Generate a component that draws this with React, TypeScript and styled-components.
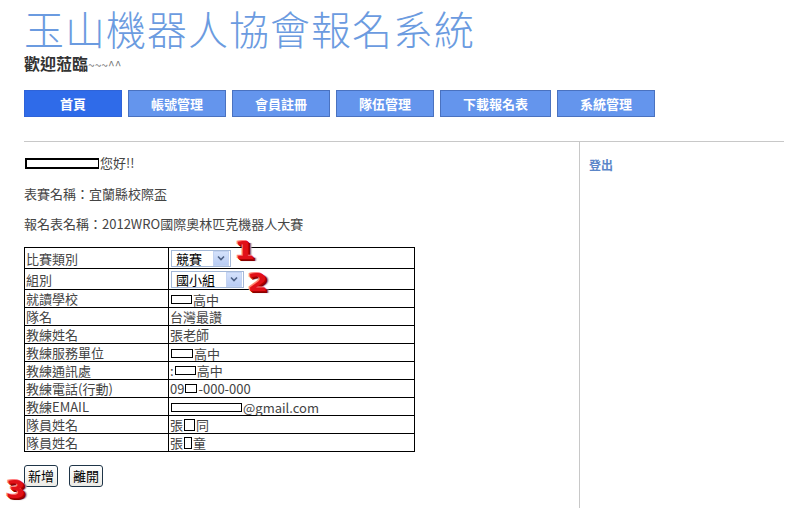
import React from 'react';
import styled, { createGlobalStyle } from 'styled-components';

const GlobalStyle = createGlobalStyle`
  html, body {
    margin: 0;
    padding: 0;
    background: #fff;
  }
  body {
    font-family: "Noto Sans CJK TC", "Noto Sans", sans-serif;
    color: #444;
  }
`;

const Page = styled.div`
  width: 793px;
  height: 508px;
  padding-left: 24px;
  padding-right: 9px;
  box-sizing: border-box;
  overflow: hidden;
`;

const Title = styled.h1`
  margin: 7px 0 0 0;
  font-size: 40px;
  line-height: 42px;
  font-weight: 300;
  letter-spacing: 1px;
  color: #6b9be0;
`;

const Welcome = styled.div`
  margin-top: 5px;
  font-size: 16px;
  line-height: 18px;
  font-weight: 700;
  color: #333;
`;

const Wave = styled.span`
  font-size: 12px;
  font-weight: 400;
  color: #777;
`;

const Nav = styled.nav`
  display: flex;
  gap: 6px;
  margin-top: 16px;
`;

const NavButton = styled.a<{ $active?: boolean; $wide?: boolean }>`
  display: flex;
  align-items: center;
  justify-content: center;
  width: ${({ $wide }) => ($wide ? '109px' : '96px')};
  height: 25px;
  border: 1px solid ${({ $active }) => ($active ? '#2f63d8' : '#4a72c0')};
  background: ${({ $active }) => ($active ? '#2f6be9' : '#6495ed')};
  color: #fff;
  font-size: 13px;
  font-weight: 700;
  text-decoration: none;
`;

const Main = styled.div`
  display: grid;
  grid-template-columns: 555px 1fr;
  margin-top: 24px;
  border-top: 1px solid #c8c8c8;
  height: 380px;
`;

const Content = styled.div`
  padding-top: 13px;
`;

const Side = styled.div`
  border-left: 1px solid #c8c8c8;
  padding: 9px 0 0 9px;
`;

const Logout = styled.a`
  font-size: 12px;
  font-weight: 700;
  color: #5b86c8;
  text-decoration: none;
`;

const Line = styled.div<{ $gap?: number }>`
  font-size: 13px;
  line-height: 16px;
  color: #444;
  margin-top: ${({ $gap }) => $gap ?? 0}px;
  display: flex;
  align-items: center;
`;

const Blank = styled.span<{ $w: number; $h?: number; $thick?: boolean }>`
  display: inline-block;
  width: ${({ $w }) => $w}px;
  height: ${({ $h }) => $h ?? 9}px;
  border: ${({ $thick }) => ($thick ? 2 : 1)}px solid #000;
  border-right-width: 1px;
  box-sizing: border-box;
  vertical-align: middle;
  margin: 0 1px;
`;

const TableWrap = styled.div`
  position: relative;
  margin-top: 15px;
  width: 391px;
`;

const Table = styled.table`
  border-collapse: collapse;
  width: 391px;
  border: 1px solid #000;
  font-size: 13px;
  color: #444;
`;

const Cell = styled.td<{ $tall?: boolean }>`
  border: 1px solid #000;
  padding: 0 0 0 1px;
  height: ${({ $tall }) => ($tall ? 20 : 17)}px;
  line-height: 15px;
  white-space: nowrap;
  vertical-align: middle;
`;

const LabelCell = styled(Cell)`
  width: 142px;
`;

const Inline = styled.span`
  display: inline-flex;
  align-items: center;
`;

const SelectBox = styled.span<{ $w: number }>`
  display: inline-flex;
  align-items: center;
  justify-content: space-between;
  width: ${({ $w }) => $w}px;
  height: 17px;
  margin-left: 1px;
  border: 1px solid #a5b9d8;
  box-sizing: border-box;
  background: #fff;
  padding-left: 4px;
  color: #000;
  font-size: 13px;
`;

const SelectArrow = styled.span`
  display: flex;
  align-items: center;
  justify-content: center;
  width: 16px;
  height: 15px;
  margin-right: 1px;
  background: linear-gradient(#d4e1fb, #b9cdf4);
  border: 1px solid #c3d3f2;
  box-sizing: border-box;
`;

const Mark = styled.span<{ $x: number; $y: number }>`
  position: absolute;
  left: ${({ $x }) => $x}px;
  top: ${({ $y }) => $y}px;
  font-family: "DejaVu Sans", sans-serif;
  font-weight: 900;
  font-size: 25px;
  line-height: 25px;
  color: #e01018;
  text-shadow: -1px -1px 0 #ff8080, 1px 1px 0 #a00, 2px 2px 0 #800, 3px 2px 1px #b7a0a0;
  transform: scaleX(1.15);
`;

const Actions = styled.div`
  position: relative;
  display: flex;
  gap: 11px;
  margin-top: 13px;
`;

const ActionButton = styled.button`
  height: 22px;
  padding: 0 3px;
  border: 1px solid #1f3548;
  border-radius: 3px;
  background: linear-gradient(#ffffff, #ecebe6);
  font-family: "Noto Sans CJK TC", sans-serif;
  font-size: 13px;
  line-height: 18px;
  color: #000;
`;

const Chevron = () => (
  <svg width="8" height="6" viewBox="0 0 8 6">
    <path d="M1 1.5 L4 4.5 L7 1.5" fill="none" stroke="#4d6185" strokeWidth="1.6" />
  </svg>
);

const Select: React.FC<{ value: string; width: number }> = ({ value, width }) => (
  <SelectBox $w={width}>
    <span>{value}</span>
    <SelectArrow>
      <Chevron />
    </SelectArrow>
  </SelectBox>
);

const navItems = ['首頁', '帳號管理', '會員註冊', '隊伍管理', '下載報名表', '系統管理'];

export default function App() {
  const rows: [string, React.ReactNode][] = [
    ['就讀學校', <Inline><Blank $w={21} />高中</Inline>],
    ['隊名', '台灣最讚'],
    ['教練姓名', '張老師'],
    ['教練服務單位', <Inline><Blank $w={22} />高中</Inline>],
    ['教練通訊處', <Inline>:<Blank $w={21} />高中</Inline>],
    ['教練電話(行動)', <Inline>09<Blank $w={12} />-000-000</Inline>],
    ['教練EMAIL', <Inline><Blank $w={71} /> @gmail.com</Inline>],
    ['隊員姓名', <Inline>張<Blank $w={11} $h={12} />同</Inline>],
    ['隊員姓名', <Inline>張 <Blank $w={8} $h={12} />童</Inline>],
  ];

  return (
    <Page>
      <GlobalStyle />
      <Title>玉山機器人協會報名系統</Title>
      <Welcome>
        歡迎蒞臨<Wave>~~~^^</Wave>
      </Welcome>
      <Nav>
        {navItems.map((item, i) => (
          <NavButton key={item} $active={i === 0} $wide={item === '下載報名表'}>
            {item}
          </NavButton>
        ))}
      </Nav>
      <Main>
        <Content>
          <Line>
            <Blank $w={74} $h={11} $thick />
            您好!!
          </Line>
          <Line $gap={15}>表賽名稱：宜蘭縣校際盃</Line>
          <Line $gap={14}>報名表名稱：2012WRO國際奧林匹克機器人大賽</Line>
          <TableWrap>
            <Table>
              <tbody>
                <tr>
                  <LabelCell $tall>比賽類別</LabelCell>
                  <Cell $tall>
                    <Select value="競賽" width={60} />
                  </Cell>
                </tr>
                <tr>
                  <LabelCell $tall>組別</LabelCell>
                  <Cell $tall>
                    <Select value="國小組" width={73} />
                  </Cell>
                </tr>
                {rows.map(([label, value], i) => (
                  <tr key={i}>
                    <LabelCell>{label}</LabelCell>
                    <Cell>{value}</Cell>
                  </tr>
                ))}
              </tbody>
            </Table>
            <Mark $x={212} $y={-9}>1</Mark>
            <Mark $x={225} $y={23}>2</Mark>
          </TableWrap>
          <Actions>
            <ActionButton>新增</ActionButton>
            <ActionButton>離開</ActionButton>
            <Mark $x={-17} $y={12}>3</Mark>
          </Actions>
        </Content>
        <Side>
          <Logout>登出</Logout>
        </Side>
      </Main>
    </Page>
  );
}
